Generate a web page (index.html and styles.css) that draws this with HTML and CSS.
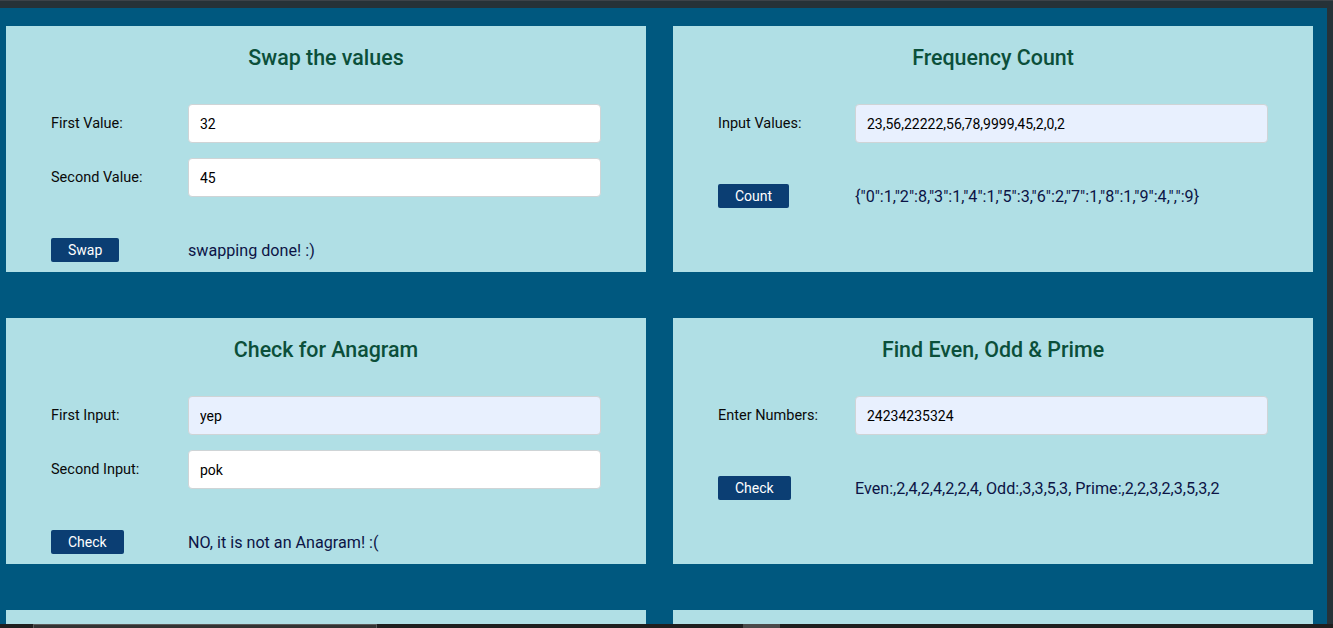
FILE: index.html
```html
<!DOCTYPE html>
<html>
<head>
<meta charset="utf-8">
<link rel="stylesheet" href="styles.css">
</head>
<body>
<div class="window">
  <div class="topbar"></div>
  <div class="content">
    <main class="grid">
      <section class="card">
        <h2 class="title">Swap the values</h2>
        <div class="row"><label class="label">First Value:</label><input class="field" value="32"></div>
        <div class="row"><label class="label">Second Value:</label><input class="field" value="45"></div>
        <div class="actions"><button class="btn">Swap</button><span class="msg">swapping done! :)</span></div>
      </section>
      <section class="card">
        <h2 class="title">Frequency Count</h2>
        <div class="row"><label class="label">Input Values:</label><input class="field filled" value="23,56,22222,56,78,9999,45,2,0,2"></div>
        <div class="actions"><button class="btn">Count</button><span class="msg">{"0":1,"2":8,"3":1,"4":1,"5":3,"6":2,"7":1,"8":1,"9":4,",":9}</span></div>
      </section>
      <section class="card">
        <h2 class="title">Check for Anagram</h2>
        <div class="row"><label class="label">First Input:</label><input class="field filled" value="yep"></div>
        <div class="row"><label class="label">Second Input:</label><input class="field" value="pok"></div>
        <div class="actions"><button class="btn">Check</button><span class="msg">NO, it is not an Anagram! :(</span></div>
      </section>
      <section class="card">
        <h2 class="title">Find Even, Odd &amp; Prime</h2>
        <div class="row"><label class="label">Enter Numbers:</label><input class="field filled" value="24234235324"></div>
        <div class="actions"><button class="btn">Check</button><span class="msg">Even:,2,4,2,4,2,2,4, Odd:,3,3,5,3, Prime:,2,2,3,2,3,5,3,2</span></div>
      </section>
      <section class="card"></section>
      <section class="card"></section>
    </main>
    <div class="edge"></div>
  </div>
  <div class="bottombar">
    <div class="thumb"></div>
    <div class="thumb2"></div>
  </div>
</div>
</body>
</html>
```
FILE: styles.css
```css
* { box-sizing: border-box; }
html, body { margin: 0; padding: 0; }
body {
  font-family: Roboto, "Liberation Sans", Arial, sans-serif;
  background: #00587f;
  overflow: hidden;
}
.window {
  width: 1333px;
  height: 628px;
  display: grid;
  grid-template-rows: 8px 1fr 4px;
  overflow: hidden;
}
.topbar {
  background: #263238;
  border-top: 1px solid #3c4349;
}
.content {
  display: grid;
  grid-template-columns: 1fr 6px;
  overflow: hidden;
  min-height: 0;
}
.edge { background: #263238; }
.grid {
  padding: 18px 14px 0 6px;
  display: grid;
  grid-template-columns: 640px 640px;
  grid-auto-rows: 246px;
  column-gap: 27px;
  row-gap: 46px;
}
.card {
  background: #b0dfe5;
  padding: 20px 45px 0 45px;
}
.title {
  margin: 0 0 34px 0;
  font-size: 21.4px;
  line-height: 24px;
  font-weight: 500;
  color: #0b4f3a;
  text-align: center;
}
.row {
  display: flex;
  align-items: center;
  height: 39px;
  margin-bottom: 15px;
}
.row + .actions { margin-top: 41px; }
.label {
  width: 137px;
  font-size: 14.5px;
  color: #0a0a0a;
}
.field {
  width: 413px;
  height: 39px;
  border: 1px solid #cfd4d6;
  border-radius: 4px;
  background: #fff;
  padding: 0 11px;
  font-family: Roboto, "Liberation Sans", Arial, sans-serif;
  font-size: 14px;
  color: #000;
  outline: none;
}
.field.filled { background: #e8f0fe; }
.actions {
  display: flex;
  align-items: center;
  height: 24px;
}
.btn {
  height: 24px;
  padding: 0 17px;
  border: none;
  border-radius: 2px;
  background: #0b3e73;
  color: #fff;
  font-family: Roboto, "Liberation Sans", Arial, sans-serif;
  font-size: 14px;
}
.msg {
  margin-left: auto;
  width: 413px;
  font-size: 16.15px;
  color: #0c1445;
}
.bottombar {
  background: #1f1f1f;
  display: flex;
}
.thumb {
  margin-left: 33px;
  width: 344px;
  background: #333;
  border: 1px solid #5a5a5a;
  border-bottom: none;
}
.thumb2 {
  margin-left: 366px;
  width: 37px;
  background: #4a4a4a;
}
```
